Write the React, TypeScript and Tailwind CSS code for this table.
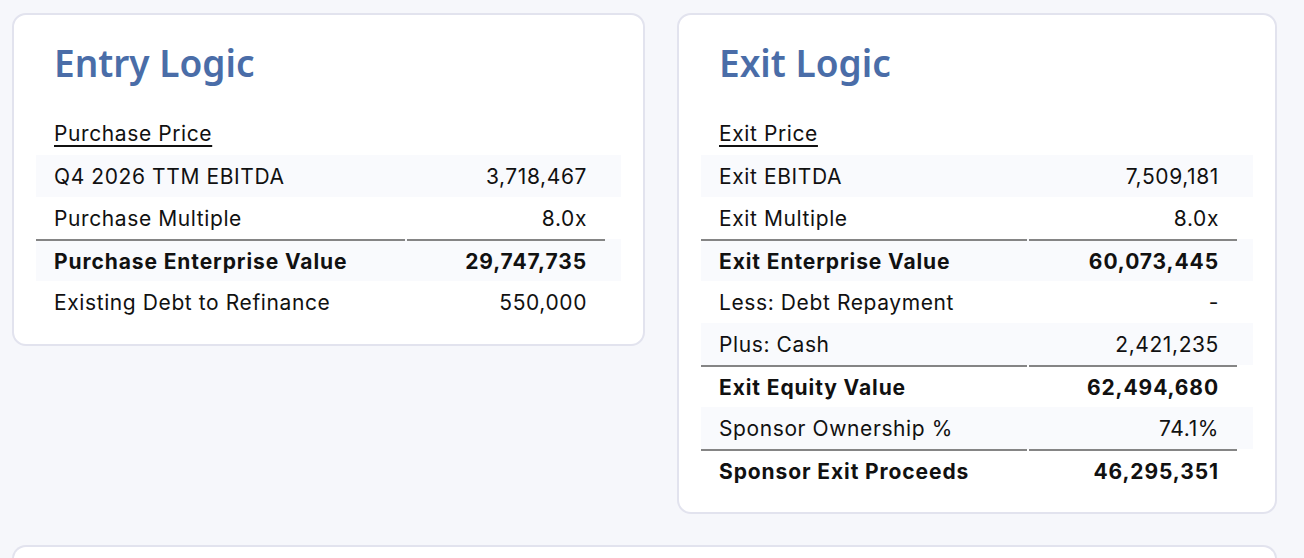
import React from "react";

type Row = { label: string; value: string; bold?: boolean; stripe?: boolean; line?: boolean };

const entryRows: Row[] = [
  { label: "Q4 2026 TTM EBITDA", value: "3,718,467", stripe: true },
  { label: "Purchase Multiple", value: "8.0x" },
  { label: "Purchase Enterprise Value", value: "29,747,735", bold: true, stripe: true, line: true },
  { label: "Existing Debt to Refinance", value: "550,000" },
];

const exitRows: Row[] = [
  { label: "Exit EBITDA", value: "7,509,181", stripe: true },
  { label: "Exit Multiple", value: "8.0x" },
  { label: "Exit Enterprise Value", value: "60,073,445", bold: true, stripe: true, line: true },
  { label: "Less: Debt Repayment", value: "-" },
  { label: "Plus: Cash", value: "2,421,235", stripe: true },
  { label: "Exit Equity Value", value: "62,494,680", bold: true, line: true },
  { label: "Sponsor Ownership %", value: "74.1%", stripe: true },
  { label: "Sponsor Exit Proceeds", value: "46,295,351", bold: true, line: true },
];

function Table({ rows, labelW, valueW }: { rows: Row[]; labelW: string; valueW: string }) {
  return (
    <div className="flex flex-col">
      {rows.map((r, i) => (
        <div
          key={i}
          className={
            "flex h-[42px] " + (r.stripe ? "bg-[#f9fafd]" : "bg-white")
          }
        >
          <div
            className={
              "flex items-center pl-[18px] pt-[1px] " +
              labelW +
              (r.line ? " border-t-2 border-[#858585]" : "") +
              (r.bold ? " font-bold tracking-[0.9px]" : " tracking-[0.6px]")
            }
          >
            {r.label}
          </div>
          <div className="w-[2px]" />
          <div
            className={
              "flex items-center justify-end pr-[18px] pt-[1px] " +
              valueW +
              (r.line ? " border-t-2 border-[#858585]" : "") +
              (r.bold ? " font-bold tracking-[0.9px]" : " tracking-[0.6px]")
            }
          >
            {r.value}
          </div>
        </div>
      ))}
    </div>
  );
}

function Card({
  title,
  sub,
  rows,
  width,
  labelW,
  valueW,
}: {
  title: string;
  sub: string;
  rows: Row[];
  width: string;
  labelW: string;
  valueW: string;
}) {
  return (
    <div className={"bg-white border-2 border-[#e2e3ee] rounded-[14px] px-[22px] pt-[27px] pb-[21px] " + width}>
      <h2
        className="text-[37px] leading-[41px] font-semibold text-[#4a6da8] pl-[18px]"
        style={{ fontFamily: "'Noto Sans', Lato, sans-serif" }}
      >
        {title}
      </h2>
      <div className="h-[42px] mt-[30px] flex items-center pl-[18px] tracking-[0.6px]">
        <span className="underline decoration-[1.5px] underline-offset-[4px]">{sub}</span>
      </div>
      <Table rows={rows} labelW={labelW} valueW={valueW} />
    </div>
  );
}

export default function App() {
  return (
    <div
      className="min-h-[558px] bg-[#f6f7fb] pl-[12px] pt-[13px] text-[21px] text-[#111]"
      style={{ fontFamily: "Inter, 'Liberation Sans', sans-serif" }}
    >
      <div className="flex items-start gap-[32px]">
        <Card
          title="Entry Logic"
          sub="Purchase Price"
          rows={entryRows}
          width="w-[633px]"
          labelW="w-[369px]"
          valueW="w-[198px]"
        />
        <Card
          title="Exit Logic"
          sub="Exit Price"
          rows={exitRows}
          width="w-[600px]"
          labelW="w-[326px]"
          valueW="w-[208px]"
        />
      </div>
      <div className="mt-[31px] w-[1265px] h-[40px] bg-white border-2 border-[#e2e3ee] rounded-t-[14px] border-b-0" />
    </div>
  );
}
